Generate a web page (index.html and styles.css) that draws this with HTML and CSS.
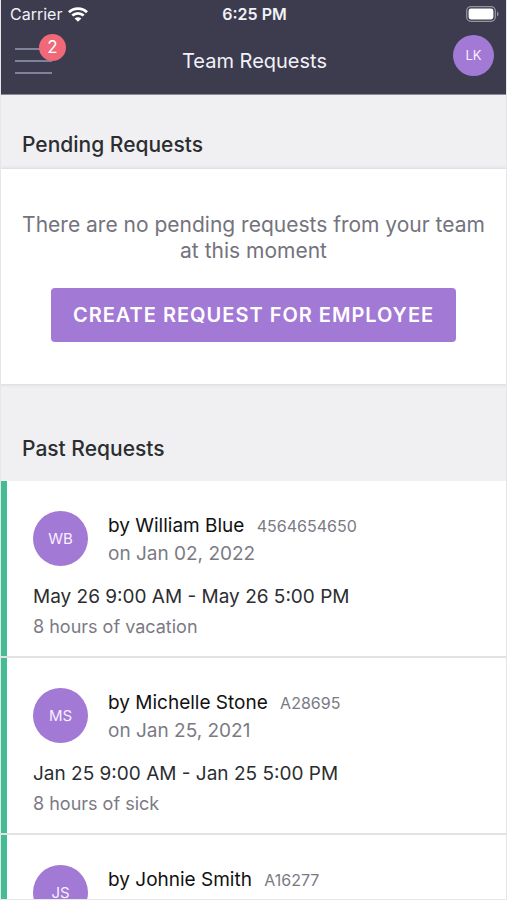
FILE: index.html
```html
<!DOCTYPE html>
<html lang="en">
<head>
  <meta charset="utf-8">
  <meta name="viewport" content="width=device-width, initial-scale=1">
  <title>Team Requests</title>
  <link rel="stylesheet" href="styles.css">
</head>
<body>
  <div class="app">
    <header class="header">
      <div class="status">
        <div class="status-left">
          <span>Carrier</span>
          <svg class="wifi" viewBox="0 0 20 15" aria-hidden="true">
            <path d="M1 5.2a13 13 0 0 1 18 0M4.3 8.6a8.2 8.2 0 0 1 11.4 0" fill="none" stroke="#fff" stroke-width="2.8"/>
            <path d="M10 14.8L6.6 11.5a4.9 4.9 0 0 1 6.8 0z" fill="#fff"/>
          </svg>
        </div>
        <span class="clock">6:25 PM</span>
        <svg class="battery" viewBox="0 0 33 16" aria-hidden="true">
          <rect x="0.7" y="0.7" width="28.6" height="14.6" rx="4.2" fill="none" stroke="#93949f" stroke-width="1.3"/>
          <rect x="2.6" y="2.6" width="24.8" height="10.8" rx="2.4" fill="#fff"/>
          <path d="M31 5.5c2 .8 2 4.2 0 5z" fill="#93949f"/>
        </svg>
      </div>
      <div class="nav">
        <button class="menu" type="button" aria-label="Menu">
          <span class="bar"></span><span class="bar"></span><span class="bar"></span>
          <span class="badge">2</span>
        </button>
        <h1 class="title">Team Requests</h1>
        <button class="avatar avatar-small" type="button">LK</button>
      </div>
    </header>
    <main class="content">
      <h2 class="heading heading-pending">Pending Requests</h2>
      <section class="empty">
        <p class="empty-text">There are no pending requests from your team at this moment</p>
        <button class="create" type="button">CREATE REQUEST FOR EMPLOYEE</button>
      </section>
      <h2 class="heading heading-past">Past Requests</h2>
      <ul class="list">
        <li class="item">
          <div class="person">
            <span class="avatar">WB</span>
            <div class="person-text">
              <p class="by">by William Blue <span class="code">4564654650</span></p>
              <p class="on">on Jan 02, 2022</p>
            </div>
          </div>
          <p class="range">May 26 9:00 AM - May 26 5:00 PM</p>
          <p class="amount">8 hours of vacation</p>
        </li>
        <li class="item">
          <div class="person">
            <span class="avatar">MS</span>
            <div class="person-text">
              <p class="by">by Michelle Stone <span class="code">A28695</span></p>
              <p class="on">on Jan 25, 2021</p>
            </div>
          </div>
          <p class="range">Jan 25 9:00 AM - Jan 25 5:00 PM</p>
          <p class="amount">8 hours of sick</p>
        </li>
        <li class="item">
          <div class="person">
            <span class="avatar">JS</span>
            <div class="person-text">
              <p class="by">by Johnie Smith <span class="code">A16277</span></p>
              <p class="on">on Jan 25, 2021</p>
            </div>
          </div>
        </li>
      </ul>
    </main>
  </div>
</body>
</html>
```
FILE: styles.css
```css
* {
  box-sizing: border-box;
}

body,
h1,
h2,
p,
ul {
  margin: 0;
  padding: 0;
}

body {
  font-family: Inter, "Liberation Sans", sans-serif;
  color: #2b2d31;
  background: #f0f0f2;
}

button {
  font-family: inherit;
  border: 0;
  padding: 0;
  cursor: pointer;
}

.app {
  display: flex;
  flex-direction: column;
  height: 100vh;
  border: solid #e6e6e9;
  border-width: 0 1px 1px;
}

.header {
  background: #3d3c4e;
  color: #f1f1f8;
  border-bottom: 1px solid #8b8b96;
}

.status {
  display: grid;
  grid-template-columns: 1fr auto 1fr;
  align-items: center;
  height: 28px;
  padding: 0 7px 0 9px;
  font-size: 16px;
}

.status-left {
  display: flex;
  align-items: center;
  gap: 6px;
}

.wifi {
  width: 20px;
  height: 15px;
}

.clock {
  font-weight: 600;
}

.battery {
  width: 33px;
  height: 16px;
  justify-self: end;
}

.nav {
  display: grid;
  grid-template-columns: 1fr auto 1fr;
  align-items: center;
  height: 66px;
  padding: 0 12px 0 14px;
}

.menu {
  position: relative;
  display: flex;
  flex-direction: column;
  gap: 10px;
  width: 37px;
  background: none;
}

.bar {
  height: 2px;
  background: #80829a;
}

.badge {
  position: absolute;
  top: -14px;
  left: 24px;
  width: 27px;
  height: 27px;
  border-radius: 50%;
  background: #f16878;
  color: #fff;
  font-size: 17px;
  line-height: 27px;
}

.title {
  font-size: 20px;
  font-weight: 400;
}

.avatar {
  display: flex;
  align-items: center;
  justify-content: center;
  flex: none;
  width: 55px;
  height: 55px;
  border-radius: 50%;
  background: #a379d6;
  color: #f8f0ff;
  font-size: 15px;
}

.avatar-small {
  justify-self: end;
  width: 41px;
  height: 41px;
  margin-bottom: 12px;
  font-size: 13px;
}

.content {
  flex: 1;
  min-height: 0;
  overflow-y: auto;
  scrollbar-width: none;
}

.heading {
  padding: 0 21px;
  font-size: 21px;
  line-height: 26px;
  font-weight: 500;
}

.heading-pending {
  padding-top: 37px;
  padding-bottom: 11px;
}

.heading-past {
  padding-top: 52px;
  padding-bottom: 19px;
}

.empty {
  padding: 43px 20px 42px;
  background: #fff;
  text-align: center;
  box-shadow: 0 0 3px 1px #d8d8dc;
}

.empty-text {
  margin-bottom: 24px;
  color: #74737d;
  font-size: 21px;
  line-height: 26px;
}

.create {
  padding: 0 22px;
  border-radius: 4px;
  background: #a379d6;
  color: #fff;
  font-size: 20px;
  line-height: 54px;
  font-weight: 600;
  letter-spacing: 1px;
  vertical-align: top;
}

.list {
  list-style: none;
}

.item {
  padding: 30px 32px 15px;
  background: #fff;
  box-shadow: inset 6px 0 #45bd93;
  border-bottom: 2px solid #e0e2e3;
}

.person {
  display: flex;
  align-items: flex-start;
  gap: 20px;
}

.person-text {
  padding-top: 1px;
}

.by {
  color: #111;
  font-size: 19px;
  line-height: 28px;
}

.code {
  margin-left: 7px;
  color: #7b7a84;
  font-size: 16px;
}

.on {
  color: #7b7a84;
  font-size: 19px;
  line-height: 28px;
}

.range {
  margin-top: 15px;
  font-size: 19px;
  line-height: 28px;
}

.amount {
  margin-top: 2px;
  color: #7b7a84;
  font-size: 18px;
  line-height: 28px;
}
```
